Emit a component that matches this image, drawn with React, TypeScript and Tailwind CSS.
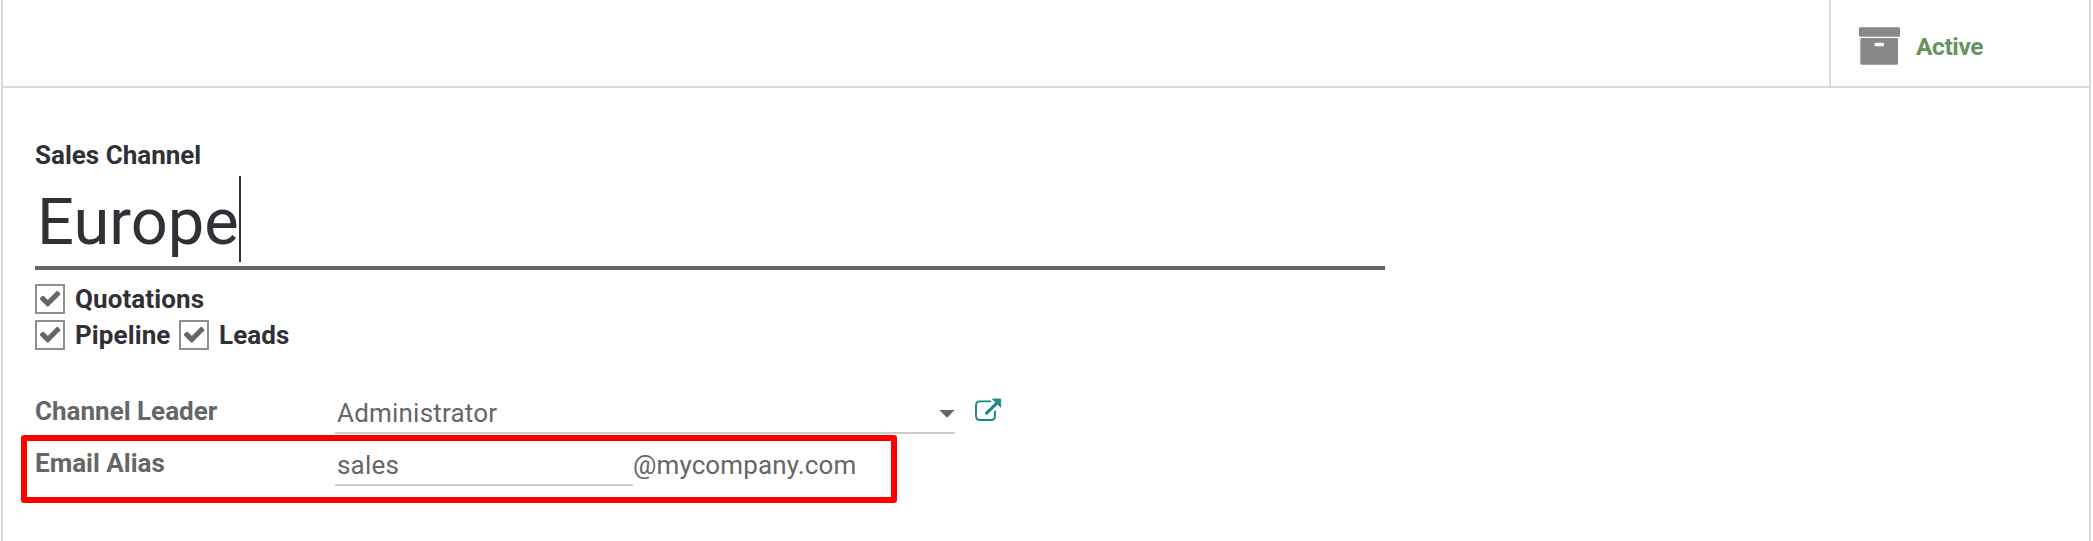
import type { ReactNode } from "react";

function ArchiveIcon() {
  return (
    <svg className="h-[38px] w-[41px] shrink-0" viewBox="0 0 41 38" fill="#888888">
      <rect x="0" y="0.2" width="41" height="9.6" rx="1.3" />
      <path
        fillRule="evenodd"
        d="M2.7 11H37.6Q39 11 39 12.4V36.4Q39 37.8 37.6 37.8H2.7Q1.3 37.8 1.3 36.4V12.4Q1.3 11 2.7 11ZM17 15.8A1.7 1.7 0 0 0 17 19.2H23.6A1.7 1.7 0 0 0 23.6 15.8Z"
      />
    </svg>
  );
}

function ExternalLinkIcon() {
  return (
    <svg className="h-6 w-[27px] shrink-0" viewBox="0 0 27 24" fill="none" stroke="#138a85">
      <path
        d="M15 3.4H5Q1 3.4 1 7.4V18Q1 22 5 22H16Q20 22 20 18V13.4"
        strokeWidth="1.9"
        strokeLinecap="round"
      />
      <path d="M11.6 15.2L22.4 4.6" strokeWidth="3.1" strokeLinecap="round" />
      <path d="M17.4 1H25.7V9.2Z" fill="#138a85" strokeWidth="0.8" strokeLinejoin="round" />
    </svg>
  );
}

function Checkbox() {
  return (
    <span className="flex h-[30px] w-[30px] shrink-0 items-center justify-center border-2 border-[#8f8f8f]">
      <svg className="h-[26px] w-[26px]" viewBox="0 0 26 26" fill="#666666">
        <path
          transform="translate(1.4 0.6) scale(0.0131)"
          d="M1671 566q0 40-28 68l-724 724-136 136q-28 28-68 28t-68-28l-136-136-362-362q-28-28-28-68t28-68l136-136q28-28 68-28t68 28l294 295 656-657q28-28 68-28t68 28l136 136q28 28 28 68z"
        />
      </svg>
    </span>
  );
}

function Check({ label, className }: { label: string; className: string }) {
  return (
    <label className={`flex items-center ${className}`}>
      <Checkbox />
      <span className="ml-[10px] tracking-[0.1px] whitespace-nowrap">{label}</span>
    </label>
  );
}

function Field({ label, children }: { label: string; children: ReactNode }) {
  return (
    <div className="flex h-[52px] items-start">
      <div className="w-[300px] shrink-0 font-bold">{label}</div>
      {children}
    </div>
  );
}

export default function App() {
  return (
    <div className="h-[541px] w-[2093px] overflow-hidden bg-white pr-[2px] pl-px font-['Roboto',sans-serif] text-[26px] leading-9">
      <div className="h-full border-x-2 border-[#d9d9d9]">
        <header className="flex h-[88px] justify-end border-b-2 border-[#d9d9d9]">
          <button className="flex w-[260px] items-start border-l-2 border-[#dddddd] pt-[27px] pl-7">
            <ArchiveIcon />
            <span className="mt-[2px] ml-[16px] text-[24.5px] font-bold tracking-[-0.4px] text-[#66935f]">
              Active
            </span>
          </button>
        </header>
        <main className="relative pt-[49px] pl-8 text-[#666666]">
          <div className="font-bold text-[#2f3136]">Sales Channel</div>
          <div className="flex h-[97px] w-[1350px] items-start border-b-4 border-[#666666] pl-[2px] text-[65px] text-[#2f3136]">
            <span className="leading-[99px]">Europe</span>
            <span className="mt-[3px] h-[86px] w-[2px] bg-[#2f3136]" />
          </div>
          <div className="mt-[11px] font-bold text-[#2f3136]">
            <div className="flex h-9">
              <Check label="Quotations" className="" />
            </div>
            <div className="flex h-9">
              <Check label="Pipeline" className="w-[144px]" />
              <Check label="Leads" className="" />
            </div>
          </div>
          <div className="mt-10">
            <Field label="Channel Leader">
              <div className="mt-[2px] flex h-[39px] w-[620px] items-start justify-between border-b-2 border-[#cccccc] pl-[2px]">
                <span className="tracking-[0.2px]">Administrator</span>
                <svg className="mt-[15px] h-2 w-4" viewBox="0 0 16 8" fill="#666666">
                  <path d="M0.3 0H15.7L8 7.7Z" />
                </svg>
              </div>
              <div className="mt-[5px] ml-5">
                <ExternalLinkIcon />
              </div>
            </Field>
            <Field label="Email Alias">
              <div className="mt-[2px] h-[39px] w-[298px] border-b-2 border-[#cccccc] pl-[2px] tracking-[0.2px]">
                sales
              </div>
              <span className="mt-[2px] tracking-[0.12px]">@mycompany.com</span>
            </Field>
          </div>
          <div className="absolute top-[347px] left-[18px] h-[68px] w-[876px] rounded-[3px] border-6 border-[#ff0000]" />
        </main>
      </div>
    </div>
  );
}
